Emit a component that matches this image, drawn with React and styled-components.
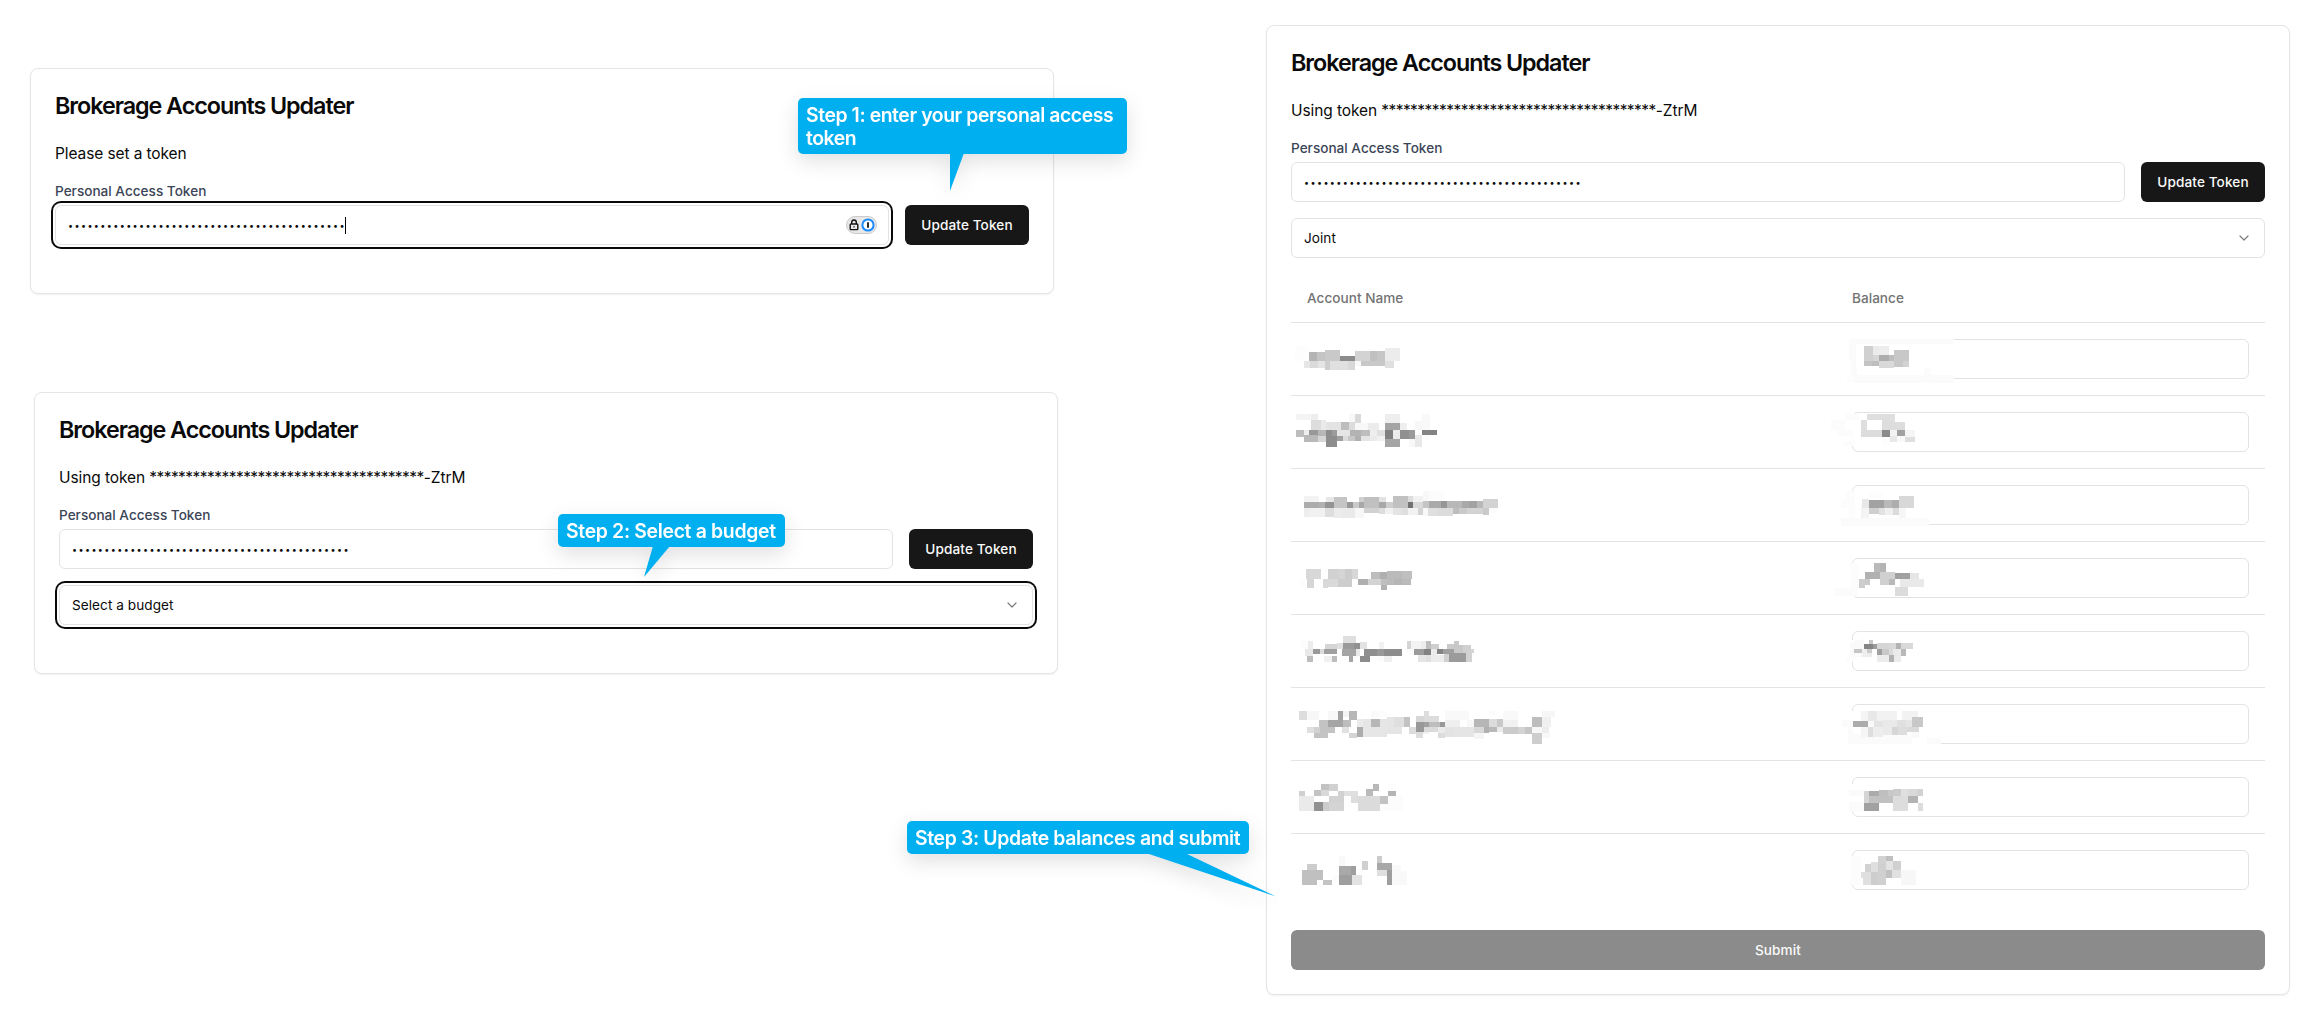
import React from 'react';
import styled, { createGlobalStyle, css } from 'styled-components';
import { ChevronDown } from 'lucide-react';

const GlobalStyle = createGlobalStyle`
  *, *::before, *::after { box-sizing: border-box; }
  body {
    margin: 0;
    background: #fff;
    color: #0a0a0a;
    font-family: Inter, "Liberation Sans", sans-serif;
    -webkit-font-smoothing: antialiased;
  }
`;

const Page = styled.main`
  position: relative;
  display: flex;
  justify-content: space-between;
  align-items: flex-start;
  width: 2324px;
  height: 1024px;
  padding: 25px 34px 0 30px;
  overflow: hidden;
`;

const Steps = styled.div`
  display: flex;
  flex-direction: column;
  gap: 98px;
  padding-top: 43px;
`;

const Card = styled.section`
  width: 1024px;
  margin-left: ${(p) => p.$indent || 0}px;
  padding: 24px;
  background: #fff;
  border: 1px solid #e5e5e5;
  border-radius: 8px;
  box-shadow: 0 1px 2px rgba(0, 0, 0, 0.06);
`;

const Title = styled.h1`
  margin: 0 0 24px;
  padding-top: 1px;
  height: 24px;
  font-size: 23.3px;
  font-weight: 600;
  line-height: 24px;
  letter-spacing: -1.03px;
`;

const Status = styled.p`
  height: 24px;
  margin: 0 0 16px;
  padding-top: 1px;
  font-size: 15.5px;
  line-height: 24px;
  letter-spacing: -0.1px;
  white-space: nowrap;
`;

const Stars = styled.span`
  letter-spacing: -0.54px;
`;

const Form = styled.div`
  display: flex;
  align-items: flex-end;
  gap: 16px;
  margin-bottom: ${(p) => (p.$last ? 24 : 16)}px;
`;

const Field = styled.label`
  display: flex;
  flex-direction: column;
  flex: 1;
  gap: 4px;
`;

const FieldLabel = styled.span`
  color: #3b4557;
  font-size: 13.6px;
  font-weight: 500;
  line-height: 20px;
  letter-spacing: 0;
`;

const focusRing = css`
  box-shadow: 0 0 0 2px #fff, 0 0 0 4px #0a0a0a;
`;

const Box = styled.div`
  display: flex;
  align-items: center;
  height: 40px;
  padding: 0 12px;
  background: #fff;
  border: 1px solid #e3e3e3;
  border-radius: 6px;
  ${(p) => p.$focused && focusRing}
`;

const SecretBox = styled(Box)`
  padding-right: 11px;
`;

const Secret = styled.span`
  padding-top: 2px;
  font-size: 9px;
  line-height: 18px;
  letter-spacing: 1.4px;
  white-space: nowrap;
`;

const Caret = styled.span`
  width: 1px;
  height: 17px;
  margin-left: -1px;
  background: #000;
`;

const Manager = styled.span`
  display: flex;
  align-items: center;
  justify-content: center;
  gap: 2px;
  width: 31px;
  height: 18px;
  margin-left: auto;
  background: #e8e8e8;
  border: 1px solid #cbcbcb;
  border-radius: 9px;
`;

const Button = styled.button`
  flex: none;
  width: ${(p) => (p.$wide ? '100%' : '124px')};
  height: 40px;
  padding: 0;
  border: 0;
  border-radius: 6px;
  background: ${(p) => (p.$muted ? '#8b8b8b' : '#171717')};
  color: #fafafa;
  font: 500 13.6px/20px Inter, sans-serif;
  letter-spacing: 0.1px;
`;

const Select = styled(Box)`
  justify-content: space-between;
  margin-bottom: ${(p) => (p.$last ? 24 : 16)}px;
  font-size: 13.6px;
  letter-spacing: 0.05px;

  svg {
    color: #7c7c7c;
  }
`;

const Table = styled.div`
  margin-bottom: 24px;
`;

const Row = styled.div`
  display: grid;
  grid-template-columns: 545px 429px;
  align-items: center;
  height: ${(p) => (p.$head ? 49 : p.$last ? 72 : 73)}px;
  border-bottom: ${(p) => (p.$last ? 'none' : '1px solid #e3e3e3')};
`;

const HeadCell = styled.div`
  padding-left: 16px;
  color: #737373;
  font-size: 13.6px;
  font-weight: 500;
  letter-spacing: 0.02px;
`;

const Cell = styled.div`
  position: relative;
  align-self: start;
  height: 72px;
  padding: 16px;
`;

const Mosaic = styled.svg`
  position: absolute;
  top: 0;
  left: 0;
  overflow: visible;
  shape-rendering: crispEdges;
`;

const Callout = styled.div`
  position: absolute;
  left: ${(p) => p.$x}px;
  top: ${(p) => p.$y}px;
  width: ${(p) => p.$w}px;
  height: ${(p) => p.$h}px;
  padding: 6px 8px 4px;
  border-radius: 5px;
  background: #00aff0;
  color: #fff;
  font-size: 19.4px;
  font-weight: 600;
  line-height: 23px;
  letter-spacing: ${(p) => p.$spacing}px;
  filter: drop-shadow(0 7px 10px rgba(0, 0, 0, 0.12));
`;

const Tail = styled.svg`
  position: absolute;
  top: 0;
  left: 0;
  overflow: visible;
  fill: #00aff0;
`;

/* Redacted cells: x, y, width, height and grey level of each block. */
const NAMES = [
  `46 48 41 45 fd,87 66 24 27 b4,111 66 24 27 c4,135 60 45 33 c9,180 78 45 15 8c,225 63 45 30 d3,270 63 21 30 c0,291 63 24 30 c6,315 54 45 39 ec,72 93 18 21 e6,90 93 24 21 da,114 93 21 21 e4,135 93 15 27 ce,150 93 54 27 e0,204 93 21 27 d8,225 93 18 15 f8,243 93 72 15 c8,315 93 27 21 e0`,
  `48 252 45 18 f4,93 252 21 18 ee,207 252 18 24 f8,225 252 18 27 da,315 252 45 27 ee,426 252 24 48 f9,93 270 30 30 dd,123 270 15 30 ea,138 276 45 24 e3,183 276 24 24 bd,207 276 18 24 dc,225 279 39 21 f8,264 279 33 21 ec,360 279 21 21 ee,405 273 21 27 f8,48 300 24 21 bd,72 300 15 15 ee,87 300 27 16 98,72 316 42 20 b9,114 300 24 18 b7,114 318 24 18 d6,138 300 18 18 8d,156 300 15 18 9c,138 318 33 33 8d,171 318 18 15 a0,171 300 39 18 e5,189 318 15 15 dc,204 318 21 15 c8,210 300 33 18 b3,225 318 18 15 b0,243 300 27 18 bd,243 318 27 15 e4,270 300 21 18 ee,270 318 21 15 ea,291 300 24 18 e0,291 318 24 15 f1,315 279 45 21 a4,315 300 24 27 80,339 300 21 27 eb,315 327 45 24 a5,360 300 27 27 90,387 300 18 27 9b,387 327 18 24 f8,405 315 21 36 e8,426 300 45 15 83,426 315 24 15 fb`,
  `72 498 45 18 f3,138 501 24 15 e8,162 501 39 33 c5,237 501 15 15 d0,252 501 45 33 c0,297 501 21 15 e3,339 498 45 36 c1,384 498 15 18 dd,399 498 30 18 f2,429 483 18 30 f8,447 483 45 27 fc,72 516 45 18 ac,117 516 18 18 b1,135 516 27 18 94,201 516 18 18 98,219 516 18 18 ca,237 516 15 18 a8,297 516 21 18 a8,318 516 21 18 ce,384 516 15 18 72,399 516 30 18 d9,429 513 18 21 c4,447 513 36 21 aa,483 513 18 21 96,501 513 45 21 b8,546 513 21 21 a9,567 513 24 21 a2,591 513 18 21 b8,609 507 45 27 d3,72 534 18 27 ee,90 534 45 27 f1,135 534 27 27 de,162 534 24 29 ec,186 534 39 29 ea,225 534 27 29 f7,252 534 45 15 d1,297 534 18 18 dd,315 534 24 18 f1,339 534 24 21 e4,363 534 21 21 df,384 534 30 21 f2,414 534 15 21 d4,429 534 15 24 f8,444 534 30 24 df,474 534 45 24 dc,519 534 18 18 bd,537 534 24 18 ca,561 534 48 18 d3,609 534 18 21 ca,627 534 24 15 fb`,
  `78 717 45 30 d8,144 717 33 30 d1,177 717 18 30 d5,195 717 21 30 cc,216 717 18 30 d7,273 726 27 21 bd,300 726 21 21 af,321 723 45 24 ba,366 723 30 24 bf,57 747 21 24 fd,81 747 21 27 d6,129 747 15 27 d9,144 747 30 24 d9,174 747 42 24 cd,234 747 30 18 af,264 747 39 18 d3,303 747 18 18 bf,321 747 21 18 bb,342 747 24 18 b5,366 747 27 18 ba,303 765 18 15 b3`,
  `63 94 21 23 fc,84 93 15 24 ec,75 117 24 21 e9,99 117 21 15 99,120 117 12 15 dc,132 117 39 15 a0,135 102 36 15 d5,171 99 18 18 df,189 78 39 21 df,189 99 33 18 9a,222 99 18 18 91,186 117 42 21 a5,228 117 12 21 ea,240 96 21 21 e3,252 117 39 21 8f,291 117 21 21 99,312 117 54 21 8d,240 138 30 18 8c,81 138 18 18 bd,132 138 24 18 f0,156 138 15 18 bd,207 138 12 18 a5,297 96 15 21 f1,291 138 21 15 fc,312 138 24 18 f0,381 93 12 24 d4,393 93 30 24 f3,423 93 15 24 ec,438 93 15 24 bd,381 117 21 18 fc,402 117 30 18 9b,432 117 21 18 82,453 102 24 15 ce,453 117 18 21 eb,471 117 18 15 83,489 117 33 15 9f,414 135 24 20 e5,438 135 15 20 e0,453 135 39 20 ec,492 132 15 24 d1,501 102 21 15 ca,522 93 15 12 c9,522 105 27 24 c8,549 105 24 24 d0,573 117 9 12 d5,507 129 51 27 9b,558 129 18 27 d2`,
  `57 303 24 27 dd,81 303 36 27 f7,144 303 30 27 f8,174 303 15 27 a3,189 303 18 18 f4,207 303 24 27 b7,117 330 27 21 c3,144 330 45 20 a5,189 330 24 21 bd,81 351 21 18 df,102 351 18 18 d2,120 351 45 18 c3,102 369 42 15 c4,186 351 21 18 e1,207 369 24 15 d4,231 327 18 24 eb,231 351 18 30 ac,249 327 24 54 e6,273 303 21 18 fa,273 327 27 24 b7,273 351 48 30 e6,294 303 27 18 fc,300 327 21 24 e6,321 321 21 51 e5,342 321 30 30 df,342 351 24 21 e5,372 321 18 30 c3,408 318 24 18 d7,432 303 15 18 de,432 318 45 18 dc,387 351 21 21 dc,408 336 24 30 99,432 336 15 18 a1,447 336 33 15 bd,480 336 15 15 99,408 366 21 18 dd,429 366 18 6 f2,432 351 42 15 db,474 351 21 18 eb,474 369 21 15 dc,495 303 72 27 f9,495 330 45 21 ef,495 351 24 30 e3,519 351 63 30 e5,561 330 21 21 f8,582 327 45 27 b6,612 351 15 18 b1,582 351 30 18 d8,582 369 30 18 f5,627 327 24 24 dc,651 327 18 24 c9,627 351 24 15 b9,651 351 18 15 eb,627 303 24 15 fc,669 303 45 27 f9,669 330 45 21 f1,669 351 45 21 cb,714 351 21 21 d3,735 351 21 21 c6,756 321 30 30 bd,756 351 30 18 f7,756 369 30 33 cd,786 303 39 18 f6,786 321 27 30 f0,786 351 21 18 ed,786 369 24 15 f8`,
  `57 543 18 15 d0,123 522 24 21 c3,147 522 27 21 d1,102 540 21 18 c3,123 540 24 18 d9,174 543 18 15 d2,192 543 42 15 e0,213 558 21 21 dd,57 558 45 45 ea,147 558 45 18 d2,102 576 27 27 91,129 576 18 27 cc,147 576 45 27 d4,234 558 66 45 db,258 537 21 21 ba,279 522 18 21 b8,300 558 24 24 c3,324 543 24 15 b5,324 522 24 21 fd,300 582 24 21 fc,324 558 45 45 fc`,
  `81 762 30 18 cd,66 780 45 45 c0,111 780 18 30 c0,129 810 27 15 c4,159 795 18 15 fc,177 738 18 30 f9,177 768 36 27 a9,213 768 15 27 9e,177 795 39 30 9e,216 795 30 30 e3,246 753 18 27 d0,291 738 15 21 cb,291 759 45 21 a8,291 780 30 18 df,321 780 15 45 9e,336 765 27 18 f9,336 783 45 42 f9`,
];

const BALANCES = [
  `50 22 322 136 ff,57 27 315 15 fb,57 42 21 52 fb,63 94 18 40 fb,50 134 32 24 fd,72 134 210 24 fb,282 115 22 42 fb,304 134 68 24 fb,78 45 294 69 ff,82 94 200 40 ff,102 48 27 45 d0,129 48 18 27 eb,147 48 30 27 ed,129 75 18 18 d6,102 93 24 15 c3,126 93 21 15 be,147 75 30 18 ad,177 75 15 18 bd,147 93 45 20 d9,192 60 45 33 c8,192 93 27 18 c8,219 93 18 18 d3`,
  `42 251 50 98 ff,45 252 45 18 fc,3 270 42 30 fc,24 300 45 18 fc,42 333 30 16 fc,111 252 45 18 df,156 252 39 24 de,93 270 18 30 de,156 276 69 24 dd,93 300 63 21 dc,156 300 24 21 8b,180 300 21 18 f3,201 300 24 18 a1,225 300 30 21 f5,180 318 21 18 e8,201 318 24 18 f9,225 321 30 15 df,156 321 24 26 fd`,
  `54 484 21 103 ff,33 565 264 24 fb,48 484 27 24 fc,33 508 42 25 fc,57 533 18 32 fc,117 484 42 20 fd,96 507 21 27 e8,117 510 45 24 a2,162 510 24 24 b9,186 510 21 24 ad,207 498 45 36 d8,93 534 24 30 f4,117 534 30 18 cf,147 534 18 21 e2,165 534 24 21 ef,189 534 18 21 db,207 534 21 30 f6`,
  `60 699 24 98 fc,15 774 66 24 fb,132 699 18 27 ba,150 699 18 27 b4,105 726 45 21 b1,150 726 45 21 d0,195 729 45 18 a0,240 729 27 18 e6,87 747 18 27 cd,105 747 15 18 ca,150 747 27 18 d0,177 747 18 18 b9,210 747 72 24 e9,195 771 39 27 dc`,
  `48 90 28 65 ff,72 90 30 27 fa,60 99 36 42 fa,48 141 24 15 fc,117 90 12 12 c8,102 102 27 15 84,129 102 12 15 9b,72 117 24 12 c6,96 117 15 24 ef,111 117 15 12 cb,111 129 15 12 eb,141 99 36 18 d5,177 99 21 18 d8,198 99 15 18 b4,213 99 36 18 d9,141 117 15 18 9f,156 117 21 18 c9,177 117 12 18 db,189 117 24 21 ea,213 117 15 21 b8,141 135 36 21 ec,177 135 15 21 b1,192 138 21 18 ec`,
  `54 303 279 100 ff,36 330 33 21 fb,54 351 15 51 fb,291 384 42 18 fb,69 372 177 30 fb,93 303 21 30 f5,114 303 27 30 e8,141 303 60 30 f2,216 303 48 27 f2,69 333 45 18 ac,114 333 18 18 f9,132 333 27 18 e4,159 330 42 21 e9,201 330 27 21 e0,228 330 18 21 e6,246 321 33 30 c8,93 351 21 30 f5,114 351 15 30 de,129 351 30 30 ed,159 351 27 24 ea,186 351 18 24 d6,204 351 27 24 dd,231 351 36 15 d9,246 366 21 18 f9`,
  `57 522 45 81 ff,57 540 45 18 fb,57 576 45 27 fb,102 543 15 36 d5,117 543 30 15 ab,147 540 27 18 bf,117 558 72 21 c1,174 540 15 18 c8,189 537 24 21 cb,213 537 21 21 e0,234 537 27 21 d9,261 537 18 21 d2,189 558 45 45 dd,234 558 30 21 b3,102 579 45 24 a1,264 579 15 24 dd`,
  `60 738 33 87 fc,144 738 24 24 d2,168 738 21 15 bf,168 753 21 27 e3,189 753 24 27 d0,105 762 18 24 d2,123 756 21 30 df,93 786 30 18 df,123 786 21 39 cd,99 804 24 21 df,144 762 24 63 d0,168 780 18 24 c1,186 780 27 24 e1,213 780 45 45 f7`,
];

function Redaction({ data, row, x }) {
  const y = row * 219 - (row < 4 ? 21 : 861);
  return (
    <Mosaic width="429" height="73" viewBox={`${x} ${y} 1287 219`} aria-hidden="true">
      {data.split(',').map((block, i) => {
        const [bx, by, w, h, tone] = block.split(' ');
        return <rect key={i} x={bx} y={by} width={w} height={h} fill={`#${tone}${tone}${tone}`} />;
      })}
    </Mosaic>
  );
}

function PasswordIcons() {
  return (
    <Manager>
      <svg width="10" height="12" viewBox="0 0 10 12" fill="none" stroke="#111" strokeWidth="1.4">
        <rect x="1.2" y="5" width="7.6" height="5.6" rx="0.8" />
        <path d="M2.7 5V3.3a2.3 2.3 0 0 1 4.6 0V5" />
        <path d="M5 7v1.6" strokeWidth="1" />
      </svg>
      <svg width="14" height="14" viewBox="0 0 14 14">
        <circle cx="7" cy="7" r="5.6" fill="#fff" stroke="#1a8cff" strokeWidth="2" />
        <path d="M7 4.2v5.6" stroke="#222" strokeWidth="1.9" />
      </svg>
    </Manager>
  );
}

function TokenStatus() {
  return (
    <Status>
      Using token <Stars>{'*'.repeat(38)}</Stars>-ZtrM
    </Status>
  );
}

function TokenForm({ focused, last }) {
  return (
    <Form $last={last}>
      <Field>
        <FieldLabel>Personal Access Token</FieldLabel>
        <SecretBox $focused={focused}>
          <Secret>{'•'.repeat(43)}</Secret>
          {focused && <Caret />}
          {focused && <PasswordIcons />}
        </SecretBox>
      </Field>
      <Button>Update Token</Button>
    </Form>
  );
}

function BudgetSelect({ value, focused, last }) {
  return (
    <Select $focused={focused} $last={last}>
      {value}
      <ChevronDown size={16} strokeWidth={1.8} />
    </Select>
  );
}

function StepCallout({ x, y, w, h, tail, spacing = -0.36, children }) {
  return (
    <Callout $x={x} $y={y} $w={w} $h={h} $spacing={spacing}>
      <Tail width={w} height={h}>
        <polygon points={tail} />
      </Tail>
      {children}
    </Callout>
  );
}

export default function App() {
  return (
    <>
      <GlobalStyle />
      <Page>
        <Steps>
          <Card>
            <Title>Brokerage Accounts Updater</Title>
            <Status>Please set a token</Status>
            <TokenForm focused last />
          </Card>
          <Card $indent={4}>
            <Title>Brokerage Accounts Updater</Title>
            <TokenStatus />
            <TokenForm />
            <BudgetSelect value="Select a budget" focused last />
          </Card>
        </Steps>
        <Card>
          <Title>Brokerage Accounts Updater</Title>
          <TokenStatus />
          <TokenForm />
          <BudgetSelect value="Joint" />
          <Table>
            <Row $head>
              <HeadCell>Account Name</HeadCell>
              <HeadCell>Balance</HeadCell>
            </Row>
            {NAMES.map((name, i) => (
              <Row key={i} $last={i === NAMES.length - 1}>
                <Cell>
                  <Redaction data={name} row={i} x={33} />
                </Cell>
                <Cell>
                  <Box />
                  <Redaction data={BALANCES[i]} row={i} x={18} />
                </Cell>
              </Row>
            ))}
          </Table>
          <Button $wide $muted>
            Submit
          </Button>
        </Card>
        <StepCallout x={798} y={98} w={329} h={56} spacing={-0.42} tail="152,55 166,55 152,93">
          Step 1: enter your personal access token
        </StepCallout>
        <StepCallout x={558} y={514} w={227} h={33} spacing={-0.32} tail="95,32 112,32 86,63">
          Step 2: Select a budget
        </StepCallout>
        <StepCallout x={907} y={821} w={342} h={33} tail="239,32 278,32 369,75.5">
          Step 3: Update balances and submit
        </StepCallout>
      </Page>
    </>
  );
}
